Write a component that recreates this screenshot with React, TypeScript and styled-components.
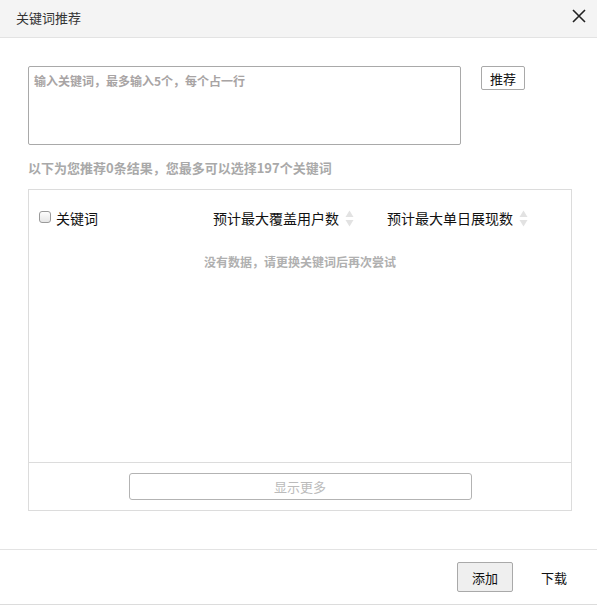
import React from "react";
import styled, { createGlobalStyle } from "styled-components";

const Global = createGlobalStyle`
  html, body { margin: 0; padding: 0; background: #fff; }
  body { font-family: "Microsoft YaHei", "Noto Sans CJK SC", "Liberation Sans", sans-serif; }
  * { box-sizing: border-box; }
`;

const Dialog = styled.div`
  width: 597px;
  height: 605px;
  display: flex;
  flex-direction: column;
  border-bottom: 1px solid #dcdcdc;
  background: #fff;
`;

const Header = styled.div`
  height: 38px;
  flex: none;
  background: #f4f4f4;
  border-bottom: 1px solid #e3e3e3;
  display: flex;
  align-items: center;
  justify-content: space-between;
  padding: 0 10px 0 16px;
`;

const Title = styled.div`
  font-size: 13px;
  color: #333;
  line-height: 1;
  margin-top: -2px;
`;

const CloseBtn = styled.button`
  border: 0;
  background: transparent;
  padding: 0;
  width: 16px;
  height: 16px;
  display: flex;
  align-items: center;
  justify-content: center;
  margin-top: -6px;
  cursor: pointer;
`;

const Body = styled.div`
  flex: 1;
  padding: 28px 25px 0 28px;
  display: flex;
  flex-direction: column;
`;

const InputRow = styled.div`
  display: flex;
  align-items: flex-start;
  gap: 20px;
`;

const TextArea = styled.textarea`
  width: 433px;
  height: 79px;
  border: 1px solid #a9a9a9;
  border-radius: 2px;
  padding: 5px 5px;
  font-size: 12px;
  font-family: inherit;
  resize: none;
  outline: none;
  &::placeholder {
    color: #a8a4a4;
    font-weight: 700;
  }
`;

const Button = styled.button<{ $w: number; $h: number; $bg?: string }>`
  width: ${(p) => p.$w}px;
  height: ${(p) => p.$h}px;
  border: 1px solid #a9a9a9;
  border-radius: 2px;
  background: ${(p) => p.$bg || "#fff"};
  font-family: inherit;
  font-size: 13px;
  color: #111;
  padding: 0;
  cursor: pointer;
`;

const Hint = styled.div`
  margin-top: 14px;
  font-size: 13px;
  font-weight: 700;
  color: #a9a9a9;
  line-height: 18px;
`;

const TableBox = styled.div`
  margin-top: 12px;
  width: 544px;
  height: 322px;
  border: 1px solid #dcdcdc;
  display: flex;
  flex-direction: column;
`;

const TableMain = styled.div`
  flex: 1;
`;

const HeadRow = styled.div`
  display: grid;
  grid-template-columns: 174px 174px 1fr;
  padding: 18px 0 0 10px;
  height: 36px;
  align-items: center;
`;

const HeadCell = styled.div`
  display: flex;
  align-items: center;
  font-size: 14px;
  color: #111;
`;

const Check = styled.span`
  width: 12px;
  height: 12px;
  border: 1px solid #9a9a9a;
  border-radius: 3px;
  background: linear-gradient(#fdfdfd, #e6e6e6);
  margin-right: 5px;
  margin-top: -2px;
`;

const Empty = styled.div`
  text-align: center;
  margin-top: 27px;
  font-size: 12px;
  font-weight: 700;
  color: #b0b0b0;
`;

const MoreBar = styled.div`
  height: 48px;
  flex: none;
  border-top: 1px solid #dcdcdc;
  display: flex;
  justify-content: center;
  padding-top: 10px;
`;

const MoreBtn = styled.button`
  width: 343px;
  height: 27px;
  border: 1px solid #b3b3b3;
  border-radius: 3px;
  background: #fff;
  color: #bbb;
  font-family: inherit;
  font-size: 13px;
  padding: 0;
`;

const Footer = styled.div`
  height: 55px;
  flex: none;
  border-top: 1px solid #e3e3e3;
  display: flex;
  align-items: flex-start;
  justify-content: flex-end;
  padding: 12px 30px 0 0;
  gap: 28px;
`;

const LinkBtn = styled.button`
  border: 0;
  background: transparent;
  font-family: inherit;
  font-size: 13px;
  color: #111;
  padding: 0;
  height: 30px;
`;

const SortIcon = () => (
  <svg width="9" height="17" viewBox="0 0 9 17" style={{ marginLeft: 6 }}>
    <path d="M4.5 0.5 L8.5 7 L0.5 7 Z" fill="#e2e2e2" />
    <path d="M4.5 16.5 L8.5 10 L0.5 10 Z" fill="#e2e2e2" />
  </svg>
);

export default function App() {
  return (
    <>
      <Global />
      <Dialog>
        <Header>
          <Title>关键词推荐</Title>
          <CloseBtn aria-label="close">
            <svg width="14" height="14" viewBox="0 0 14 14">
              <path d="M1 1 L13 13 M13 1 L1 13" stroke="#222" strokeWidth="1.6" />
            </svg>
          </CloseBtn>
        </Header>
        <Body>
          <InputRow>
            <TextArea placeholder="输入关键词，最多输入5个，每个占一行" />
            <Button $w={44} $h={24}>推荐</Button>
          </InputRow>
          <Hint>以下为您推荐0条结果，您最多可以选择197个关键词</Hint>
          <TableBox>
            <TableMain>
              <HeadRow>
                <HeadCell>
                  <Check />
                  关键词
                </HeadCell>
                <HeadCell>
                  预计最大覆盖用户数
                  <SortIcon />
                </HeadCell>
                <HeadCell>
                  预计最大单日展现数
                  <SortIcon />
                </HeadCell>
              </HeadRow>
              <Empty>没有数据，请更换关键词后再次尝试</Empty>
            </TableMain>
            <MoreBar>
              <MoreBtn>显示更多</MoreBtn>
            </MoreBar>
          </TableBox>
        </Body>
        <Footer>
          <Button $w={56} $h={30} $bg="#efefef">添加</Button>
          <LinkBtn>下载</LinkBtn>
        </Footer>
      </Dialog>
    </>
  );
}
